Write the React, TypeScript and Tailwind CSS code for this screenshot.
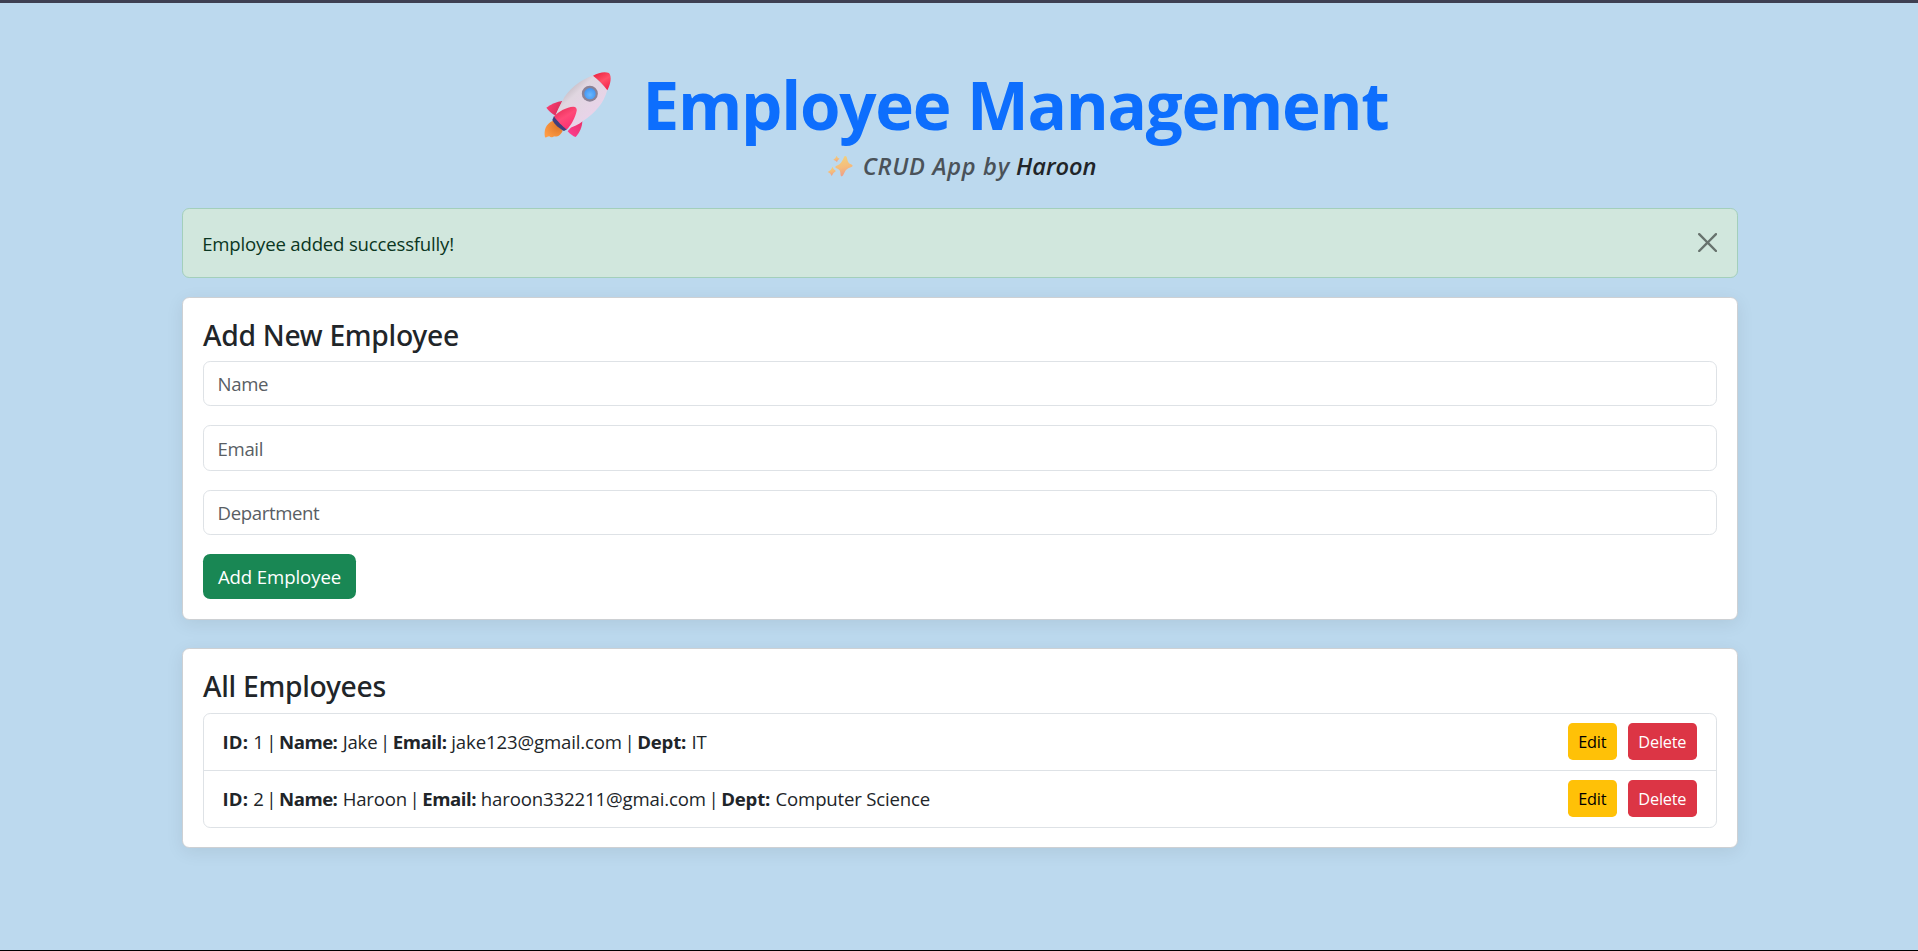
import type { ReactNode } from "react";

const employees = [
  { id: 1, name: "Jake", email: "jake123@gmail.com", dept: "IT" },
  { id: 2, name: "Haroon", email: "haroon332211@gmai.com", dept: "Computer Science" },
];

function Rocket() {
  return (
    <svg viewBox="40 30 210 210" className="h-[70px] w-[70px] shrink-0" aria-hidden="true">
      <defs>
        <linearGradient id="hull" x1="0.2" y1="0.2" x2="0.75" y2="0.8">
          <stop offset="0" stopColor="#bdb5bd" />
          <stop offset="0.3" stopColor="#e0d6e0" />
          <stop offset="1" stopColor="#ead3ea" />
        </linearGradient>
        <linearGradient id="nose" x1="0.2" y1="0" x2="0.8" y2="1">
          <stop offset="0" stopColor="#ec2340" />
          <stop offset="0.5" stopColor="#ff4f68" />
          <stop offset="1" stopColor="#f3214a" />
        </linearGradient>
        <linearGradient id="fin" x1="0.2" y1="0" x2="0.8" y2="1">
          <stop offset="0" stopColor="#e52c55" />
          <stop offset="0.45" stopColor="#ff4a78" />
          <stop offset="1" stopColor="#fb2a72" />
        </linearGradient>
        <linearGradient id="sideFin" x1="0" y1="0" x2="1" y2="0.5">
          <stop offset="0" stopColor="#ff3f74" />
          <stop offset="1" stopColor="#d92f5c" />
        </linearGradient>
        <linearGradient id="rightFin" x1="0" y1="1" x2="1" y2="0">
          <stop offset="0" stopColor="#ff3f94" />
          <stop offset="1" stopColor="#e83268" />
        </linearGradient>
        <radialGradient id="glass" cx="0.5" cy="0.6" r="0.6">
          <stop offset="0" stopColor="#6ab8ff" />
          <stop offset="1" stopColor="#3f93f2" />
        </radialGradient>
        <radialGradient id="flame" cx="0.8" cy="0.3" r="0.9">
          <stop offset="0" stopColor="#dd7628" />
          <stop offset="1" stopColor="#ff9c45" />
        </radialGradient>
      </defs>
      <path d="M70 182C48 192 42 210 46 232C52 233 55 228 59 229C63 234 70 232 73 229C83 232 95 224 99 212Z" fill="url(#flame)" />
      <path d="M50 143C64 132 82 125 98 123L78 167C68 162 56 152 50 143Z" fill="url(#sideFin)" />
      <path d="M158 182C158 200 150 217 138 231C130 229 121 222 114 214L128 198Z" fill="url(#rightFin)" />
      <path d="M192 46C150 60 114 90 98 123C90 139 82 152 77 168L112 205C132 202 147 193 160 183C196 160 222 130 233 90Z" fill="url(#hull)" />
      <path d="M190 47C207 37 226 34 238 39C247 50 243 72 233 91C221 74 206 59 190 47Z" fill="url(#nose)" />
      <path d="M73 168L112 208L103 213C90 207 75 194 68 180Z" fill="#3f3f7c" />
      <path d="M73 169C88 154 110 141 131 140C139 140 142 145 141 152C137 172 126 193 111 209C100 200 82 184 73 169Z" fill="url(#fin)" />
      <circle cx="180.500" cy="101" r="24" fill="#8b8295" />
      <circle cx="181" cy="101" r="17" fill="url(#glass)" />
    </svg>
  );
}

function Sparkles() {
  return (
    <svg viewBox="24 31 79 68" className="h-[22.6px] w-[26.3px] shrink-0" aria-hidden="true">
      <defs>
        <linearGradient id="spark" x1="0.3" y1="0" x2="0.5" y2="1">
          <stop offset="0" stopColor="#f0d27f" />
          <stop offset="0.55" stopColor="#f5bd7c" />
          <stop offset="1" stopColor="#ee9c88" />
        </linearGradient>
      </defs>
      <g fill="url(#spark)">
        <path d="M79 34Q83 34 84 40Q86 52 90 56Q94 58 99 60Q103 63 99 66Q86 70 81 76Q77 82 72 93Q68 98 65 93Q65 82 62 77Q58 73 51 70Q47 67 51 64Q62 59 66 54Q71 48 75 38Q76 34 79 34Z" />
        <path d="M53 33Q55 40 62 42Q56 45 54 52Q50 47 43 45Q50 41 53 33Z" />
        <path d="M41 66Q42 75 51 79Q42 84 38 94Q35 85 26 82Q37 77 41 66Z" />
      </g>
    </svg>
  );
}

function Card({ title, className, children }: { title: string; className: string; children: ReactNode }) {
  return (
    <section
      className={
        "rounded-[7.2px] border border-[#cdd0d3] bg-white px-5 shadow-[0_4px_18px_rgba(0,0,0,0.075)] " + className
      }
    >
      <h2 className="font-['Noto_Sans','Open_Sans',sans-serif] text-[28.3px] leading-[35px] font-medium tracking-[-0.3px] text-[#212529]">
        {title}
      </h2>
      {children}
    </section>
  );
}

function Field({ label, className }: { label: string; className: string }) {
  return (
    <input
      placeholder={label}
      className={
        "block w-full rounded-[7.2px] border border-[#dee2e6] bg-white px-[13.6px] tracking-[-0.38px] outline-none placeholder:text-[#595e64] " +
        className
      }
    />
  );
}

function Label({ children, className }: { children: ReactNode; className: string }) {
  return <strong className={"font-bold " + className}>{children}</strong>;
}

function Divider() {
  return <span className="-mr-[1.8px] -ml-[2.2px]">|</span>;
}

export default function App() {
  return (
    <div className="flex min-h-[951px] flex-col border-t-[3px] border-b border-t-[#3e4052] border-b-black bg-[#bcd9ee] pl-[2px] font-['Open_Sans','Noto_Sans',sans-serif] text-[18.6px] tracking-[-0.19px] text-[#212529]">
      <main className="mx-auto w-[1556px] pt-[61px]">
        <header className="flex h-[144px] flex-col items-center">
          <h1 className="flex h-[81px] items-center gap-[29px] pl-[12px] text-[65.5px] leading-[81px] font-bold tracking-[-1.25px] text-[#0d6efd] [word-spacing:1px]">
            <Rocket />
            <span>Employee Management</span>
          </h1>
          <p className="mt-[3px] flex h-9 items-center pl-[4px] text-[23.6px] leading-9 font-semibold text-[#4a5259] italic">
            <Sparkles />
            <span className="ml-[9px] tracking-[0.7px]">CRUD App by</span>
            <span className="ml-[6px] tracking-normal text-[#212529]">Haroon</span>
          </p>
        </header>

        <div className="flex h-[70px] items-center justify-between rounded-[7.2px] border border-[#a3cfbb] bg-[#d1e7dd] pr-5 pl-[19.2px] text-[#0a3622]">
          <span className="pt-[2px]">Employee added successfully!</span>
          <button type="button" aria-label="Close" className="mb-[1px] opacity-50">
            <svg viewBox="0 0 16 16" fill="#000" className="h-[19.2px] w-[19.2px]">
              <path d="M.293.293a1 1 0 0 1 1.414 0L8 6.586 14.293.293a1 1 0 1 1 1.414 1.414L9.414 8l6.293 6.293a1 1 0 0 1-1.414 1.414L8 9.414l-6.293 6.293a1 1 0 0 1-1.414-1.414L6.586 8 .293 1.707a1 1 0 0 1 0-1.414" />
            </svg>
          </button>
        </div>

        <Card title="Add New Employee" className="mt-[19px] h-[323px] pt-[20px]">
          <Field label="Name" className="mt-[8px] h-[45px]" />
          <Field label="Email" className="mt-[19px] h-[46px]" />
          <Field label="Department" className="mt-[19px] h-[45px]" />
          <button
            type="button"
            className="mt-[19px] h-[45px] w-[153px] rounded-[7.2px] bg-[#198754] tracking-[-0.1px] text-white"
          >
            Add Employee
          </button>
        </Card>

        <Card title="All Employees" className="mt-[28px] h-[200px] pt-[20px]">
          <ul className="mt-[9px] divide-y divide-[#dee2e6] rounded-[7.2px] border border-[#dee2e6]">
            {employees.map((e) => (
              <li
                key={e.id}
                className="flex h-[57px] items-center justify-between pr-[19.2px] pb-px pl-[18.4px] last:h-[56px]"
              >
                <span className="pt-px whitespace-pre">
                  <Label className="mr-[0.4px] tracking-[0.2px]">ID:</Label> {e.id} <Divider />{" "}
                  <Label className="mr-[0.6px] tracking-[-0.5px]">Name:</Label> {e.name} <Divider />{" "}
                  <Label className="tracking-[-0.45px]">Email:</Label>{" "}
                  <span className="tracking-[-0.14px]">{e.email}</span> <Divider />{" "}
                  <Label className="mr-[0.8px] tracking-[-0.2px]">Dept:</Label> {e.dept}
                </span>
                <span className="flex gap-[11px] text-[16.3px] tracking-[-0.2px]">
                  <button type="button" className="h-[37px] w-[49px] rounded-[4.8px] bg-[#ffc107] pt-px text-black">
                    Edit
                  </button>
                  <button type="button" className="h-[37px] w-[69px] rounded-[4.8px] bg-[#dc3545] pt-px text-white">
                    Delete
                  </button>
                </span>
              </li>
            ))}
          </ul>
        </Card>
      </main>
    </div>
  );
}
